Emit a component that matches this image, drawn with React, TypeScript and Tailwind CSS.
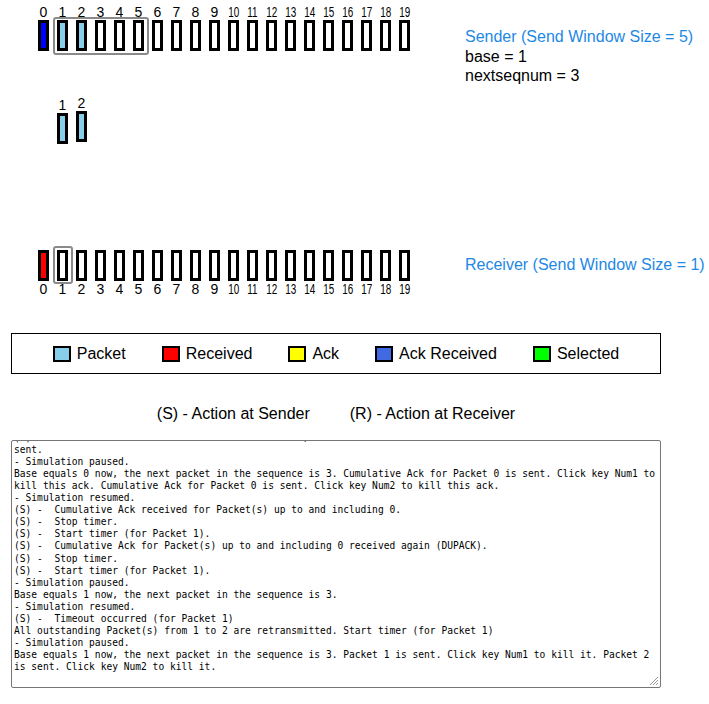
import React from "react";

const SENDER_FILL: Record<number, string> = {
  0: "bg-[#0000ff]",
  1: "bg-[#87ceeb]",
  2: "bg-[#87ceeb]",
};

const RECEIVER_FILL: Record<number, string> = {
  0: "bg-[#ff0000]",
};

const nums = Array.from({ length: 20 }, (_, i) => i);

const Packet = ({ fill }: { fill: string }) => (
  <div className={`h-[31px] w-[11px] border-[3px] border-black ${fill}`} />
);

// canvas-style label: two digit numbers are squeezed into the packet width
const Label = ({ n }: { n: number }) => (
  <div className="flex h-4 w-[11px] justify-center text-[14px] leading-4">
    <span className={n >= 10 ? "inline-block scale-x-[0.707] whitespace-nowrap" : "whitespace-nowrap"}>
      {n}
    </span>
  </div>
);

const LOG = [
  "(R) -  Packet 2 received. Packet 2 is out of order, so it is discarded. Cumulative Ack for Packet 0 is",
  "sent.",
  "- Simulation paused.",
  "Base equals 0 now, the next packet in the sequence is 3. Cumulative Ack for Packet 0 is sent. Click key Num1 to",
  "kill this ack. Cumulative Ack for Packet 0 is sent. Click key Num2 to kill this ack.",
  "- Simulation resumed.",
  "(S) -  Cumulative Ack received for Packet(s) up to and including 0.",
  "(S) -  Stop timer.",
  "(S) -  Start timer (for Packet 1).",
  "(S) -  Cumulative Ack for Packet(s) up to and including 0 received again (DUPACK).",
  "(S) -  Stop timer.",
  "(S) -  Start timer (for Packet 1).",
  "- Simulation paused.",
  "Base equals 1 now, the next packet in the sequence is 3.",
  "- Simulation resumed.",
  "(S) -  Timeout occurred (for Packet 1)",
  "All outstanding Packet(s) from 1 to 2 are retransmitted. Start timer (for Packet 1)",
  "- Simulation paused.",
  "Base equals 1 now, the next packet in the sequence is 3. Packet 1 is sent. Click key Num1 to kill it. Packet 2",
  "is sent. Click key Num2 to kill it.",
];

const LEGEND = [
  { label: "Packet", fill: "bg-[#87ceeb]" },
  { label: "Received", fill: "bg-[#ff0000]" },
  { label: "Ack", fill: "bg-[#ffff00]" },
  { label: "Ack Received", fill: "bg-[#4169e1]" },
  { label: "Selected", fill: "bg-[#00ff00]" },
];

export default function App() {
  return (
    <div className="h-[704px] w-[709px] overflow-hidden bg-white font-['Liberation_Sans',Arial,sans-serif] text-black">
      <div className="relative h-[297px]">
        {/* sender */}
        <div className="flex h-[250px] items-start pl-[38px] pt-[4px]">
          <div className="relative">
            <div className="flex gap-2">
              {nums.map((n) => (
                <Label key={n} n={n} />
              ))}
            </div>
            <div className="flex gap-2">
              {nums.map((n) => (
                <Packet key={n} fill={SENDER_FILL[n] ?? "bg-white"} />
              ))}
            </div>
            <div className="absolute left-[15px] top-[13px] h-[38px] w-[96px] rounded-[3px] border-2 border-[#8a8a8a]" />
          </div>
          <div className="ml-[55px] mt-[23px] text-[16px] leading-[19.5px]">
            <div className="text-[#1e88e5]">Sender (Send Window Size = 5)</div>
            <div>base = 1</div>
            <div>nextseqnum = 3</div>
          </div>
        </div>

        {/* packets in flight */}
        <div className="absolute left-[57px] top-[97px]">
          <Label n={1} />
          <Packet fill="bg-[#87ceeb]" />
        </div>
        <div className="absolute left-[76px] top-[95px]">
          <Label n={2} />
          <Packet fill="bg-[#87ceeb]" />
        </div>

        {/* receiver */}
        <div className="flex items-start pl-[38px]">
          <div className="relative">
            <div className="flex gap-2">
              {nums.map((n) => (
                <Packet key={n} fill={RECEIVER_FILL[n] ?? "bg-white"} />
              ))}
            </div>
            <div className="flex gap-2">
              {nums.map((n) => (
                <Label key={n} n={n} />
              ))}
            </div>
            <div className="absolute left-[15px] top-[-4px] h-[38px] w-[20px] rounded-[3px] border-2 border-[#8a8a8a]" />
          </div>
          <div className="ml-[55px] mt-[5px] text-[16px] leading-[19.5px] text-[#1e88e5]">
            Receiver (Send Window Size = 1)
          </div>
        </div>
      </div>

      {/* legend */}
      <div className="ml-[11px] mt-[36px] flex h-[41px] w-[650px] items-center justify-center gap-[36px] border border-black text-[16px]">
        {LEGEND.map((item) => (
          <div key={item.label} className="flex items-center gap-[6px]">
            <div className={`h-[16px] w-[18px] border-2 border-black ${item.fill}`} />
            <span>{item.label}</span>
          </div>
        ))}
      </div>

      <div className="ml-[11px] mt-[31px] flex w-[650px] justify-center gap-[40px] text-[16px] leading-[18px]">
        <span>(S) - Action at Sender</span>
        <span>(R) - Action at Receiver</span>
      </div>

      {/* log */}
      <div className="relative ml-[11px] mt-[17px] flex h-[248px] w-[650px] flex-col justify-end overflow-hidden rounded-[2px] border border-[#767676] pb-[14px] pl-[2px] font-['DejaVu_Sans_Mono',monospace] text-[9.6px] leading-[12.05px] text-black">
        {LOG.map((line, i) => (
          <div key={i} className="whitespace-pre">
            {line}
          </div>
        ))}
        <svg className="absolute bottom-[1px] right-[1px]" width="11" height="11" viewBox="0 0 11 11">
          <path d="M10 2 L2 10 M10 5 L5 10 M10 8 L8 10" stroke="#9a9a9a" strokeWidth="1" />
        </svg>
      </div>
    </div>
  );
}
